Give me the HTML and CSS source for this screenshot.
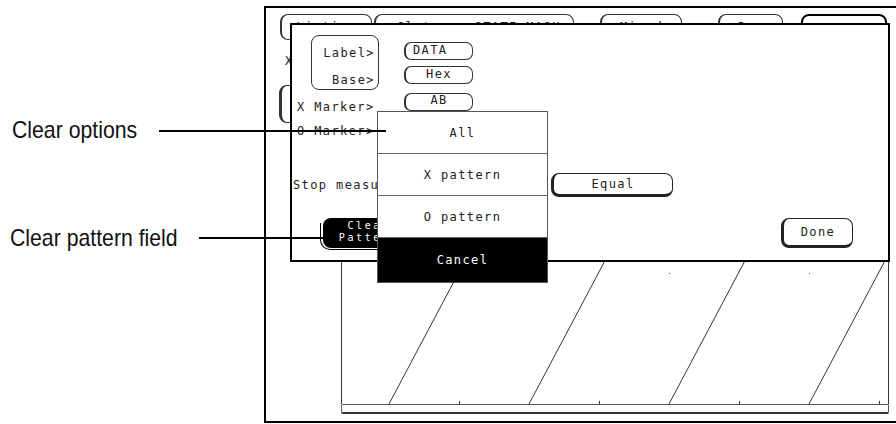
FILE: index.html
```html
<!DOCTYPE html>
<html>
<head>
<meta charset="utf-8">
<link rel="stylesheet" href="styles.css">
</head>
<body>
<div class="page">
  <div class="callouts">
    <div class="callout callout-options"><span class="callout-label">Clear options</span><span class="leader"></span></div>
    <div class="callout callout-pattern"><span class="callout-label">Clear pattern field</span><span class="leader"></span></div>
  </div>
  <div class="screen">
    <div class="under">
      <div class="tabs">
        <div class="tab tab-1">Listing</div>
        <div class="tab tab-2">Slot     STATE MASK</div>
        <div class="tab tab-3">Mixed</div>
        <div class="tab tab-4">Run</div>
        <div class="tab tab-5">Done</div>
      </div>
      <div class="under-body">
        <div class="under-left">
          <div class="under-x">X</div>
          <div class="under-btn"></div>
        </div>
        <div class="graph-col">
          <div class="graph">
            <svg width="546" height="264" viewBox="0 0 546 264">
              <g stroke="#333" stroke-width="1" fill="none">
                <line x1="47" y1="264" x2="187" y2="0"/>
                <line x1="187" y1="264" x2="327" y2="0"/>
                <line x1="327" y1="264" x2="467" y2="0"/>
                <line x1="467" y1="264" x2="607" y2="0"/>
                <line x1="117.5" y1="261" x2="117.5" y2="264"/>
                <line x1="257.5" y1="261" x2="257.5" y2="264"/>
                <line x1="397.5" y1="261" x2="397.5" y2="264"/>
                <line x1="537.5" y1="261" x2="537.5" y2="264"/>
              </g>
              <g fill="#555">
                <rect x="47" y="133" width="1" height="1"/>
                <rect x="187" y="133" width="1" height="1"/>
                <rect x="327" y="133" width="1" height="1"/>
                <rect x="467" y="133" width="1" height="1"/>
              </g>
            </svg>
          </div>
          <div class="graph-bar"></div>
        </div>
      </div>
    </div>

    <div class="dialog">
      <div class="d-top">
        <div class="d-left">
          <div class="labelbox">
            <span>Label&gt;</span>
            <span>Base&gt;</span>
          </div>
          <div class="marker marker-x">X Marker&gt;</div>
          <div class="marker">O Marker&gt;</div>
        </div>
        <div class="d-btns">
          <div class="pill pill-data">DATA</div>
          <div class="pill pill-hex">Hex</div>
          <div class="pill pill-ab">AB</div>
        </div>
      </div>
      <div class="d-stop">
        <div class="stop-text">Stop measurement</div>
        <div class="btn-3d equal">Equal</div>
      </div>
      <div class="d-bottom">
        <div class="clear-btn"><span class="clear-text">Clear<br>Pattern</span></div>
        <div class="btn-3d done">Done</div>
      </div>
    </div>

    <div class="menu">
      <div class="menu-item">All</div>
      <div class="menu-item">X pattern</div>
      <div class="menu-item">O pattern</div>
      <div class="menu-item menu-cancel">Cancel</div>
    </div>
  </div>
</div>
</body>
</html>
```

FILE: styles.css
```css
body {
  margin: 0;
  background: #fff;
}

.page {
  display: flex;
  width: 896px;
  height: 424px;
  overflow: hidden;
}

/* ---------- callouts ---------- */
.callouts {
  flex: none;
  width: 264px;
  display: flex;
  flex-direction: column;
  position: relative;
  z-index: 5;
  font-family: "Liberation Sans", Arial, sans-serif;
  font-size: 24px;
  color: #111;
}

.callout {
  display: flex;
  align-items: center;
  height: 24px;
}

.callout > * {
  flex: none;
}

.callout-label {
  display: block;
  white-space: nowrap;
  line-height: 24px;
  transform: scaleX(0.885);
  transform-origin: left center;
}

.callout-options {
  margin-top: 118px;
  padding-left: 12px;
}

.callout-options .callout-label {
  width: 147px;
}

.callout-options .leader {
  width: 227px;
  margin-top: 2px;
}

.callout-pattern {
  margin-top: 84px;
  padding-left: 10px;
}

.callout-pattern .callout-label {
  width: 189px;
}

.callout-pattern .leader {
  width: 124px;
}

.leader {
  height: 2px;
  background: #000;
}

/* ---------- instrument screen ---------- */
.screen {
  flex: none;
  width: 640px;
  height: 417px;
  margin-top: 6px;
  border: 2px solid #000;
  box-sizing: border-box;
  position: relative;
  z-index: 1;
  font-family: "DejaVu Sans Mono", monospace;
  font-size: 12px;
  letter-spacing: 1.4px;
  color: #222;
}

.under {
  padding: 6px 0 0 13px;
}

.tabs {
  display: flex;
  height: 26px;
}

.tab {
  flex: none;
  box-sizing: border-box;
  height: 26px;
  border: 1px solid #333;
  border-left-width: 2px;
  border-radius: 8px;
  padding-top: 6px;
  line-height: 12px;
  white-space: pre;
  text-align: center;
}

.tab-1 {
  margin-left: 1px;
  width: 92px;
}

.tab-2 {
  margin-left: 2px;
  width: 200px;
  text-align: left;
  padding-left: 21px;
}

.tab-3 {
  margin-left: 26px;
  width: 82px;
}

.tab-4 {
  margin-left: 36px;
  width: 65px;
}

.tab-5 {
  margin-left: 18px;
  width: 86px;
  border-width: 2px;
  border-color: #000;
}

.under-body {
  display: flex;
}

.under-left {
  flex: none;
  width: 62px;
}

.under-x {
  margin-top: 15px;
  line-height: 12px;
  padding-left: 6px;
}

.under-btn {
  margin-top: 18px;
  width: 60px;
  height: 38px;
  box-sizing: border-box;
  border: 1px solid #333;
  border-left-width: 3px;
  border-radius: 8px;
}

.graph-col {
  flex: none;
  width: 548px;
  margin-top: 100px;
}

.graph {
  height: 264px;
  border-left: 1px solid #333;
  border-right: 1px solid #333;
  box-sizing: border-box;
}

.graph svg {
  display: block;
}

.graph-bar {
  height: 10px;
  border: 1px solid #555;
  border-bottom: 2px solid #333;
  border-radius: 2px;
  box-sizing: border-box;
}

/* ---------- dialog ---------- */
.dialog {
  position: absolute;
  left: 24px;
  top: 15px;
  width: 600px;
  height: 239px;
  box-sizing: border-box;
  border: 2px solid #000;
  background: #fff;
  z-index: 2;
  padding: 10px 35px 0 1px;
  display: flex;
  flex-direction: column;
}

.d-top {
  display: flex;
}

.d-left {
  flex: none;
  width: 111px;
  display: flex;
  flex-direction: column;
}

.labelbox {
  margin-left: 18px;
  width: 68px;
  height: 55px;
  box-sizing: border-box;
  border: 1px solid #333;
  border-radius: 8px;
  display: flex;
  flex-direction: column;
  align-items: flex-end;
  gap: 13px;
  padding: 10px 3px 0 0;
  line-height: 14px;
}

.marker {
  padding-left: 4px;
  line-height: 24px;
  white-space: nowrap;
}

.marker-x {
  margin-top: 5px;
}

.d-btns {
  margin-top: 7px;
  display: flex;
  flex-direction: column;
}

.pill {
  width: 69px;
  height: 18px;
  box-sizing: border-box;
  border: 1px solid #333;
  border-left-width: 2px;
  border-radius: 7px;
  line-height: 15px;
  text-align: center;
}

.pill-data {
  text-align: left;
  padding-left: 7px;
}

.pill-hex {
  margin-top: 6px;
}

.pill-ab {
  margin-top: 9px;
  line-height: 13px;
}

.d-stop {
  display: flex;
  align-items: center;
  margin-top: 30px;
}

.stop-text {
  flex: none;
  width: 258px;
  white-space: nowrap;
  overflow: hidden;
}

.btn-3d {
  flex: none;
  box-sizing: border-box;
  border: 1px solid #222;
  border-left-width: 3px;
  border-bottom-width: 3px;
  border-radius: 8px;
  display: flex;
  align-items: center;
  justify-content: center;
}

.equal {
  width: 122px;
  height: 24px;
}

.d-bottom {
  display: flex;
  justify-content: space-between;
  align-items: flex-start;
  margin-top: 21px;
}

.clear-btn {
  position: relative;
  margin-left: 30px;
  width: 92px;
  height: 30px;
  box-sizing: border-box;
  background: #000;
  color: #fff;
  border-radius: 8px;
  display: flex;
  align-items: center;
  justify-content: center;
  padding-bottom: 2px;
}

.clear-text {
  display: block;
  text-align: center;
  font-size: 10px;
  line-height: 12px;
  letter-spacing: 2.6px;
}

.clear-btn::before {
  content: "";
  position: absolute;
  left: -3px;
  top: 5px;
  bottom: -2px;
  right: 10px;
  border-left: 1px solid #000;
  border-bottom: 1px solid #000;
  border-bottom-left-radius: 10px;
}

.done {
  width: 72px;
  height: 30px;
}

/* ---------- pop-up menu ---------- */
.menu {
  position: absolute;
  left: 111px;
  top: 103px;
  width: 171px;
  box-sizing: border-box;
  border: 1px solid #555;
  background: #fff;
  z-index: 3;
}

.menu-item {
  height: 42px;
  box-sizing: border-box;
  border-bottom: 1px solid #666;
  display: flex;
  align-items: center;
  justify-content: center;
}

.menu-cancel {
  height: 44px;
  border-bottom: none;
  background: #000;
  color: #fff;
}
```
